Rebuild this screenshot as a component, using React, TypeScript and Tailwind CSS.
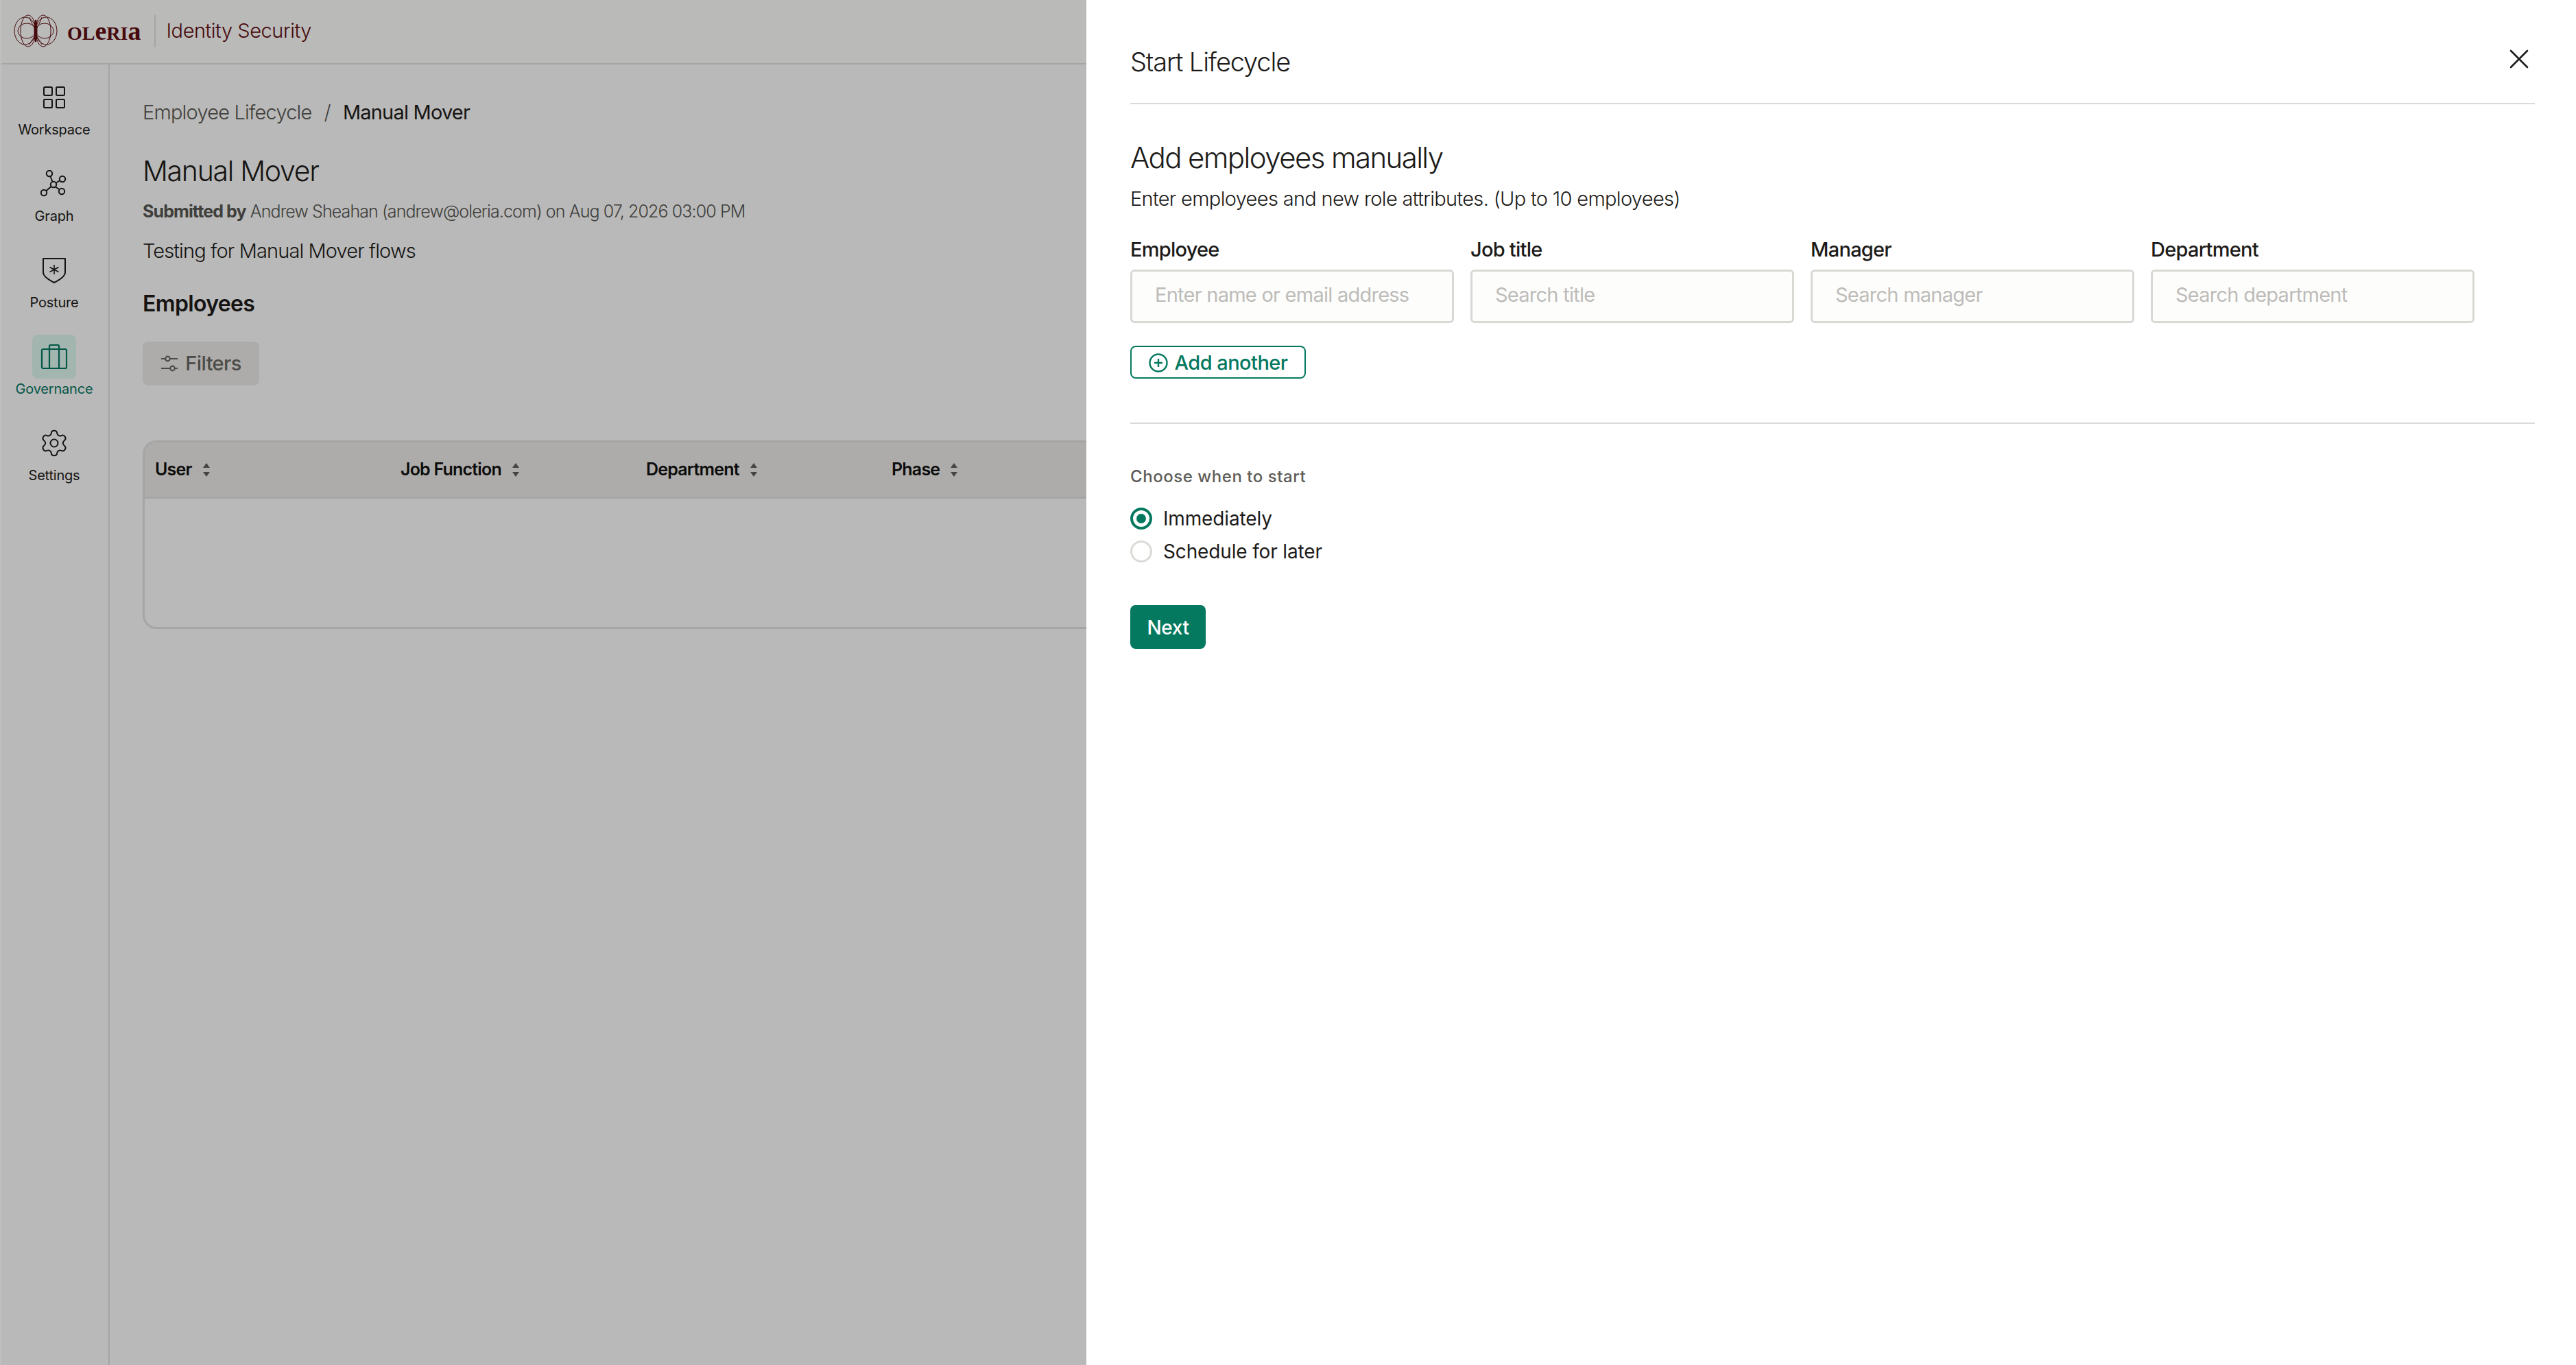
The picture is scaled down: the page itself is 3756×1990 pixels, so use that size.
import { Settings, X } from "lucide-react";

const columns = ["User", "Job Function", "Department", "Phase"];

const fields = [
  { label: "Employee", placeholder: "Enter name or email address" },
  { label: "Job title", placeholder: "Search title" },
  { label: "Manager", placeholder: "Search manager" },
  { label: "Department", placeholder: "Search department" },
];

function OleriaMark() {
  return (
    <svg viewBox="0 0 64 48" className="h-[48px] w-[64px]" fill="none" stroke="#5e0d10" strokeWidth="1">
      <ellipse cx="21" cy="24" rx="11" ry="23" />
      <ellipse cx="43" cy="24" rx="11" ry="23" />
      <ellipse cx="16.5" cy="24" rx="15.5" ry="20" />
      <ellipse cx="47.5" cy="24" rx="15.5" ry="20" />
      <ellipse cx="19" cy="24" rx="13" ry="11" />
      <ellipse cx="45" cy="24" rx="13" ry="11" />
      <path d="M32 8c-2 8-2 24 0 32M32 8c2 8 2 24 0 32" strokeWidth="2" />
      <path d="M23 4c2 8 7 14 9 20s-7 14-9 20M41 4c-2 8-7 14-9 20s7 14 9 20" />
    </svg>
  );
}

function WorkspaceIcon() {
  return (
    <svg viewBox="0 0 32 32" className="h-[32px] w-[32px]" fill="none" stroke="currentColor" strokeWidth="2">
      <rect x="1" y="1" width="12" height="12" rx="1.5" />
      <rect x="19" y="1" width="12" height="12" rx="1.5" />
      <rect x="1" y="19" width="12" height="12" rx="1.5" />
      <rect x="19" y="19" width="12" height="12" rx="1.5" />
    </svg>
  );
}

function GraphIcon() {
  return (
    <svg viewBox="0 0 40 40" className="h-[40px] w-[40px]" fill="none" stroke="currentColor" strokeWidth="2">
      <circle cx="13" cy="5" r="4.2" />
      <circle cx="19" cy="21" r="4.2" />
      <circle cx="32" cy="13" r="4.2" />
      <circle cx="5" cy="33" r="4.2" />
      <circle cx="31" cy="31" r="4.2" />
      <path d="M14.5 9l3 8M23 18.5l5.5-3.5M15.5 24l-7 6M22 24.5l6 4" />
    </svg>
  );
}

function PostureIcon() {
  return (
    <svg viewBox="0 0 36 38" className="h-[38px] w-[36px]" fill="none" stroke="currentColor" strokeWidth="2">
      <path d="M2 2h32v20c0 6-8 11-16 15C10 33 2 28 2 22V2z" strokeLinejoin="round" />
      <path d="M18 11v14M11.5 14.5l13 7M24.5 14.5l-13 7" strokeWidth="1.6" />
    </svg>
  );
}

function GovernanceIcon() {
  return (
    <svg viewBox="0 0 40 38" className="h-[38px] w-[40px]" fill="none" stroke="currentColor" strokeWidth="2.2">
      <rect x="2" y="8" width="36" height="28" rx="2" />
      <path d="M13 8V3.5C13 2.5 13.5 2 14.5 2h11c1 0 1.500.5 1.500 1.500V8M13 8v28M27 8v28" />
    </svg>
  );
}

function SlidersIcon() {
  return (
    <svg viewBox="0 0 26 24" className="h-[24px] w-[26px]" fill="none" stroke="currentColor" strokeWidth="2.2">
      <path d="M1 5h6M14 5h11M1 19h13M21 19h4" />
      <circle cx="10.5" cy="5" r="3.3" />
      <circle cx="17.5" cy="19" r="3.3" />
    </svg>
  );
}

function SortIcon() {
  return (
    <svg viewBox="0 0 12 22" className="h-[22px] w-[12px]" fill="#5b5b59">
      <path d="M6 1l5 7H1zM6 21l-5-7h10z" />
    </svg>
  );
}

function PlusCircleIcon() {
  return (
    <svg viewBox="0 0 28 28" className="h-[28px] w-[28px]" fill="none" stroke="currentColor" strokeWidth="2.4">
      <circle cx="14" cy="14" r="12.5" />
      <path d="M14 8v12M8 14h12" />
    </svg>
  );
}

function NavItem({ label, active, children }: { label: string; active?: boolean; children: React.ReactNode }) {
  return (
    <div className="flex flex-col items-center">
      <div
        className={`flex h-[64px] w-[64px] items-center justify-center rounded-[8px] ${
          active ? "bg-[#d9f2ea] text-[#05745f]" : "text-[#1c1b19]"
        }`}
      >
        {children}
      </div>
      <span className={`text-[20px] leading-[30px] tracking-[-0.2px] ${active ? "text-[#05745f]" : "text-[#1c1b19]"}`}>
        {label}
      </span>
    </div>
  );
}

export default function App() {
  return (
    <div className="relative h-screen w-full overflow-hidden bg-white pl-[2px] font-['Inter',sans-serif] text-[#1c1b19]">
      <div className="flex h-[94px] items-center border-b-2 border-[#dddddc] bg-[#f8f8f7] pb-[2px] pl-[18px]">
        <OleriaMark />
        <span className="ml-[14px] font-['Liberation_Serif',serif] text-[28px] font-bold leading-none text-[#5e0d10]">
          OL<span className="text-[38px] leading-none">e</span>RI<span className="text-[38px] leading-none">a</span>
        </span>
        <div className="ml-[20px] h-[47px] w-[2px] bg-[#dddddc]" />
        <span className="ml-[15px] text-[29px] font-light tracking-[-0.45px] text-[#5e0d10]">Identity Security</span>
      </div>

      <div className="flex h-[1896px]">
        <aside className="flex w-[158px] shrink-0 flex-col gap-[32px] border-r-2 border-[#dddddc] bg-[#f7f7f7] pr-[2px] pt-[16px]">
          <NavItem label="Workspace">
            <WorkspaceIcon />
          </NavItem>
          <NavItem label="Graph">
            <GraphIcon />
          </NavItem>
          <NavItem label="Posture">
            <PostureIcon />
          </NavItem>
          <NavItem label="Governance" active>
            <GovernanceIcon />
          </NavItem>
          <NavItem label="Settings">
            <Settings size={44} strokeWidth={1.1} />
          </NavItem>
        </aside>

        <main className="min-w-0 flex-1 bg-[#f7f7f7] pl-[48px] pr-[48px] pt-[50px]">
          <div className="flex items-center text-[29px] font-light leading-[40px] tracking-[-0.8px]">
            <span className="text-[#55544f]">Employee Lifecycle</span>
            <span className="mx-[18px] text-[#55544f]">/</span>
            <span className="font-normal">Manual Mover</span>
          </div>
          <h1 className="mt-[37px] text-[41px] font-light leading-[56px] tracking-[-1.3px]">Manual Mover</h1>
          <p className="mt-[15px] text-[25px] font-light leading-[32px] tracking-[-0.9px] text-[#55544f]">
            <span className="font-bold">Submitted by</span> Andrew Sheahan (andrew@oleria.com) on Aug 07, 2026 03:00 PM
          </p>
          <p className="mt-[24px] text-[29px] font-light leading-[36px] tracking-[-0.87px]">Testing for Manual Mover flows</p>
          <h2 className="mt-[39px] text-[32px] font-semibold leading-[40px] tracking-[-0.65px]">Employees</h2>

          <button className="mt-[35px] flex h-[64px] w-[170px] items-center justify-center gap-[10px] rounded-[8px] bg-[#e8e6e3] text-[29px] font-medium tracking-[-0.6px] text-[#65645f]">
            <SlidersIcon />
            Filters
          </button>

          <div className="mt-[80px] h-[275px] rounded-[20px] border-[3px] border-[#dddddc]">
            <div className="flex h-[82px] items-center rounded-t-[17px] border-b-[3px] border-[#dddddc] bg-[#e8e6e3] pl-[15px]">
              {columns.map((column) => (
                <div key={column} className="flex w-[358px] items-center gap-[15px] text-[25px] font-semibold tracking-[-0.8px] text-[#111110]">
                  {column}
                  <SortIcon />
                </div>
              ))}
            </div>
          </div>
        </main>
      </div>

      <div className="absolute inset-0 bg-black/25" />

      <section className="absolute bottom-0 right-0 top-0 w-[2172px] bg-white pl-[64px] pr-[60px] text-[#1c1b19]">
        <div className="border-b-2 border-[#dbdad7] pb-[38px] pt-[64px]">
          <div className="flex h-[48px] items-center justify-between">
            <h2 className="translate-y-[2px] text-[38px] font-light tracking-[-1.15px]">Start Lifecycle</h2>
            <X size={48} strokeWidth={1.3} className="-mr-[1px] -translate-y-[2px]" />
          </div>
        </div>

        <h3 className="mt-[50px] text-[42px] font-light leading-[56px] tracking-[-1.6px]">Add employees manually</h3>
        <p className="mt-[12px] text-[29px] font-light leading-[40px] tracking-[-0.67px]">
          Enter employees and new role attributes. (Up to 10 employees)
        </p>

        <div className="mt-[36px] flex gap-[24px]">
          {fields.map((field) => (
            <label key={field.label} className="flex w-[472px] flex-col">
              <span className="text-[29px] font-medium leading-[36px] tracking-[-0.75px]">{field.label}</span>
              <input
                readOnly
                placeholder={field.placeholder}
                className="mt-[11px] h-[78px] rounded-[6px] border-[3px] border-[#d9d8d5] bg-[#fdfdfc] px-[33px] pb-[5px] text-[29px] tracking-[-0.75px] outline-none placeholder:text-[#bdbcb9]"
              />
            </label>
          ))}
        </div>

        <button className="mt-[33px] flex h-[48px] w-[256px] items-center justify-center gap-[10px] rounded-[8px] border-2 border-[#05795f] pt-[1px] text-[29px] font-medium tracking-[-0.55px] text-[#05795f]">
          <PlusCircleIcon />
          Add another
        </button>

        <div className="mt-[64px] h-[2px] bg-[#dbdad7]" />

        <p className="mt-[61px] text-[24px] font-medium leading-[32px] tracking-[0.55px] text-[#5e5d58]">Choose when to start</p>

        <div className="mt-[29px] flex flex-col gap-[16px]">
          <div className="flex items-center gap-[16px] text-[28px] leading-[32px] tracking-[-0.15px]">
            <span className="flex h-[32px] w-[32px] items-center justify-center rounded-full border-[4px] border-[#05795f]">
              <span className="h-[14px] w-[14px] rounded-full bg-[#05795f]" />
            </span>
            Immediately
          </div>
          <div className="flex items-center gap-[16px] text-[28px] leading-[32px] tracking-[-0.15px]">
            <span className="h-[32px] w-[32px] rounded-full border-[3px] border-[#dbdad7]" />
            Schedule for later
          </div>
        </div>

        <button className="mt-[62px] h-[64px] w-[110px] rounded-[8px] bg-[#05795f] pt-[1px] text-[28px] font-medium tracking-[-0.4px] text-white">
          Next
        </button>
      </section>
    </div>
  );
}
